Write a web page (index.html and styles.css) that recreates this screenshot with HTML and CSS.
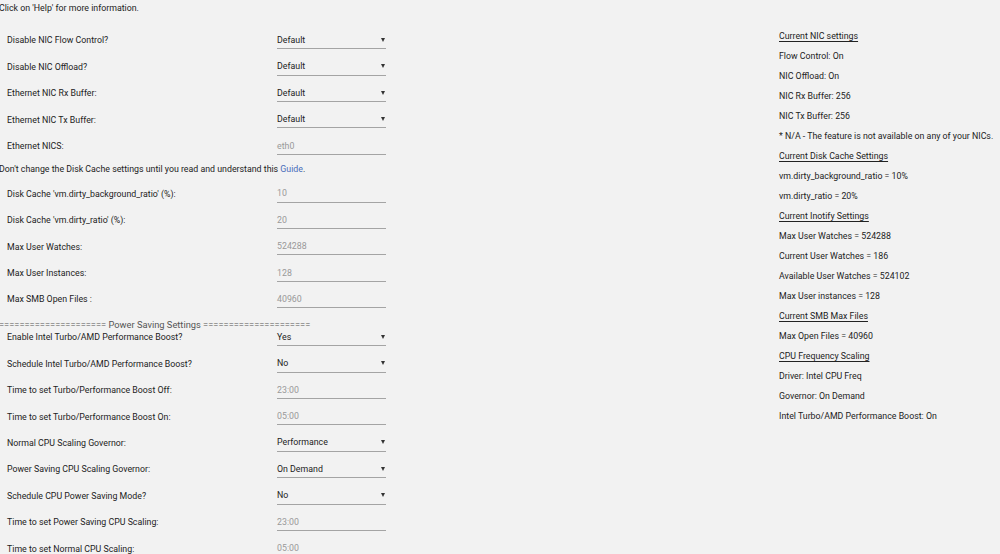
FILE: index.html
```html
<!DOCTYPE html>
<html lang="en">
<head>
  <meta charset="UTF-8">
  <meta name="viewport" content="width=device-width, initial-scale=1">
  <title>Tips and Tweaks</title>
  <link rel="stylesheet" href="styles.css">
</head>
<body>

<p class="intro">Click on 'Help' for more information.</p>

<div class="layout">
  <form class="settings">
    <div class="row">
      <label>Disable NIC Flow Control?</label>
      <div class="select">Default<span class="caret"></span></div>
    </div>
    <div class="row">
      <label>Disable NIC Offload?</label>
      <div class="select">Default<span class="caret"></span></div>
    </div>
    <div class="row">
      <label>Ethernet NIC Rx Buffer:</label>
      <div class="select">Default<span class="caret"></span></div>
    </div>
    <div class="row">
      <label>Ethernet NIC Tx Buffer:</label>
      <div class="select">Default<span class="caret"></span></div>
    </div>
    <div class="row">
      <label>Ethernet NICS:</label>
      <div class="input">eth0</div>
    </div>

    <p class="note">Don't change the Disk Cache settings until you read and understand this <a href="#">Guide</a>.</p>

    <div class="row">
      <label>Disk Cache 'vm.dirty_background_ratio' (%):</label>
      <div class="input">10</div>
    </div>
    <div class="row">
      <label>Disk Cache 'vm.dirty_ratio' (%):</label>
      <div class="input">20</div>
    </div>
    <div class="row">
      <label>Max User Watches:</label>
      <div class="input">524288</div>
    </div>
    <div class="row">
      <label>Max User Instances:</label>
      <div class="input">128</div>
    </div>
    <div class="row">
      <label>Max SMB Open Files :</label>
      <div class="input">40960</div>
    </div>

    <p class="divider">===================== Power Saving Settings =====================</p>

    <div class="row">
      <label>Enable Intel Turbo/AMD Performance Boost?</label>
      <div class="select">Yes<span class="caret"></span></div>
    </div>
    <div class="row">
      <label>Schedule Intel Turbo/AMD Performance Boost?</label>
      <div class="select">No<span class="caret"></span></div>
    </div>
    <div class="row">
      <label>Time to set Turbo/Performance Boost Off:</label>
      <div class="input">23:00</div>
    </div>
    <div class="row">
      <label>Time to set Turbo/Performance Boost On:</label>
      <div class="input">05:00</div>
    </div>
    <div class="row">
      <label>Normal CPU Scaling Governor:</label>
      <div class="select">Performance<span class="caret"></span></div>
    </div>
    <div class="row">
      <label>Power Saving CPU Scaling Governor:</label>
      <div class="select">On Demand<span class="caret"></span></div>
    </div>
    <div class="row">
      <label>Schedule CPU Power Saving Mode?</label>
      <div class="select">No<span class="caret"></span></div>
    </div>
    <div class="row">
      <label>Time to set Power Saving CPU Scaling:</label>
      <div class="input">23:00</div>
    </div>
    <div class="row">
      <label>Time to set Normal CPU Scaling:</label>
      <div class="input">05:00</div>
    </div>
  </form>

  <aside class="status">
    <p class="head">Current NIC settings</p>
    <p>Flow Control: On</p>
    <p>NIC Offload: On</p>
    <p>NIC Rx Buffer: 256</p>
    <p>NIC Tx Buffer: 256</p>
    <p>* N/A - The feature is not available on any of your NICs.</p>
    <p class="head">Current Disk Cache Settings</p>
    <p>vm.dirty_background_ratio = 10%</p>
    <p>vm.dirty_ratio = 20%</p>
    <p class="head">Current Inotify Settings</p>
    <p>Max User Watches = 524288</p>
    <p>Current User Watches = 186</p>
    <p>Available User Watches = 524102</p>
    <p>Max User instances = 128</p>
    <p class="head">Current SMB Max Files</p>
    <p>Max Open Files = 40960</p>
    <p class="head">CPU Frequency Scaling</p>
    <p>Driver: Intel CPU Freq</p>
    <p>Governor: On Demand</p>
    <p>Intel Turbo/AMD Performance Boost: On</p>
  </aside>
</div>

</body>
</html>
```

FILE: styles.css
```css
* {
  box-sizing: border-box;
  margin: 0;
  padding: 0;
}

body {
  font-family: Roboto, "Liberation Sans", sans-serif;
  font-size: 8.8px;
  color: #222;
  background-color: #f2f2f2;
  height: 554px;
  overflow: hidden;
}

.intro {
  height: 26px;
  line-height: 16px;
  margin-left: -1px;
}

.layout {
  display: grid;
  grid-template-columns: 779px 1fr;
}

.settings {
  padding-top: 1.3px;
  padding-left: 7px;
}

.row {
  display: grid;
  grid-template-columns: 270px 109px;
  align-items: center;
  height: 26.4px;
}

.select,
.input {
  height: 17.6px;
  display: flex;
  align-items: center;
  justify-content: space-between;
  border-bottom: 1px solid #a4a4a4;
}

.input {
  color: #999;
}

.caret {
  width: 0;
  height: 0;
  margin-right: 1px;
  border-left: 2.5px solid transparent;
  border-right: 2.5px solid transparent;
  border-top: 4px solid #333;
}

.note {
  height: 21.4px;
  line-height: 21.4px;
  margin-left: -8px;
}

.note a {
  color: #486dba;
  text-decoration: none;
}

.divider {
  height: 11.6px;
  line-height: 23px;
  margin-left: -8px;
  font-size: 9.3px;
  color: #555;
  white-space: nowrap;
}

.status p {
  height: 20px;
  line-height: 20px;
  white-space: nowrap;
}

.status .head {
  text-decoration: underline;
  text-underline-offset: 2px;
}
```
